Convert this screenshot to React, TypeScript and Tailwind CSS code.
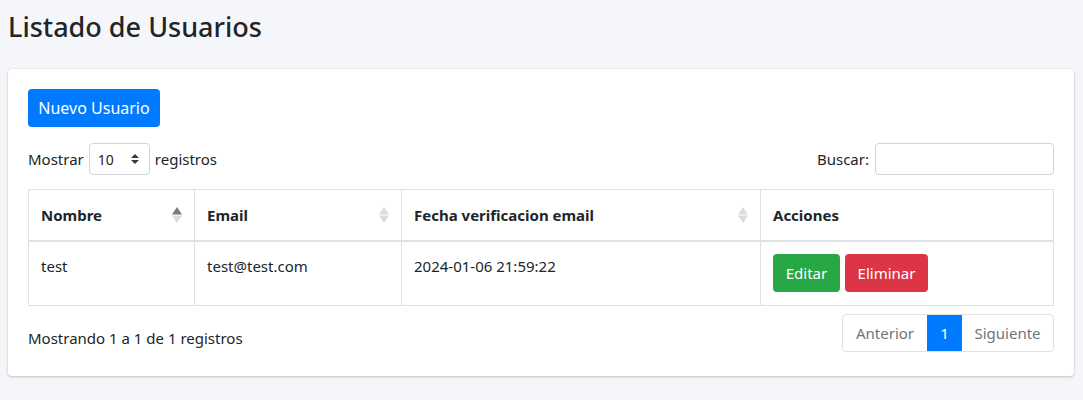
import React from 'react'

function SortIcon({ active }: { active?: boolean }) {
  return (
    <svg width="10" height="16" viewBox="0 0 10 16" className="shrink-0">
      <path d="M5 0 L10 7.5 L0 7.5 Z" fill={active ? '#7a7a7a' : '#dcdcdc'} />
      <path d="M5 16 L10 8.5 L0 8.5 Z" fill="#dcdcdc" />
    </svg>
  )
}

const users = [{ name: 'test', email: 'test@test.com', verified: '2024-01-06 21:59:22' }]

export default function App() {
  return (
    <div
      className="min-h-[400px] bg-[#f4f6f9] text-[#212529] text-[16px]"
      style={{ fontFamily: '"Noto Sans", "Open Sans", sans-serif' }}
    >
      {/* Header */}
      <div className="h-[69px] px-2 pt-[11px]">
        <h1 className="text-[27px] leading-[1.2] font-medium">Listado de Usuarios</h1>
      </div>

      {/* Card */}
      <div className="ml-[8px] h-[307px] w-[1066px] rounded-[4px] bg-white shadow-[0_0_1px_rgba(0,0,0,0.125),0_1px_3px_rgba(0,0,0,0.2)]">
        <div className="p-5">
          <button className="h-[38px] w-[132px] rounded-[4px] bg-[#007bff] text-white leading-6">
            Nuevo Usuario
          </button>

          {/* Controls */}
          <div className="mt-4 flex items-center justify-between">
            <div className="flex items-center gap-[5px] text-[15px]">
              <span>Mostrar</span>
              <div className="flex h-[32px] w-[61px] items-center justify-between rounded-[4px] border border-[#ced4da] pl-2 pr-[10px] text-[14px]">
                <span>10</span>
                <svg width="8" height="10" viewBox="0 0 8 10">
                  <path d="M4 0 L8 4 L0 4 Z M4 10 L8 6 L0 6 Z" fill="#343a40" />
                </svg>
              </div>
              <span>registros</span>
            </div>
            <div className="flex items-center gap-[6px] text-[15px]">
              <span>Buscar:</span>
              <div className="h-[32px] w-[179px] rounded-[4px] border border-[#ced4da]" />
            </div>
          </div>

          {/* Table */}
          <table className="mt-[14px] w-full table-fixed border-collapse border border-[#dee2e6]">
            <colgroup>
              <col className="w-[166px]" />
              <col className="w-[207px]" />
              <col className="w-[359px]" />
              <col />
            </colgroup>
            <thead>
              <tr className="border-b-2 border-[#dee2e6]">
                <th className="border-r border-[#dee2e6] px-3 py-[13px] text-left font-bold text-[15px] leading-6">
                  <div className="flex items-center justify-between">
                    <span>Nombre</span>
                    <SortIcon active />
                  </div>
                </th>
                <th className="border-r border-[#dee2e6] px-3 py-[13px] text-left font-bold text-[15px] leading-6">
                  <div className="flex items-center justify-between">
                    <span>Email</span>
                    <SortIcon />
                  </div>
                </th>
                <th className="border-r border-[#dee2e6] px-3 py-[13px] text-left font-bold text-[15px] leading-6">
                  <div className="flex items-center justify-between">
                    <span>Fecha verificacion email</span>
                    <SortIcon />
                  </div>
                </th>
                <th className="px-3 py-[13px] text-left font-bold text-[15px] leading-6">Acciones</th>
              </tr>
            </thead>
            <tbody>
              {users.map((u) => (
                <tr key={u.email} className="border-b border-[#dee2e6]">
                  <td className="border-r border-[#dee2e6] px-3 pt-3 pb-[13px] align-top text-[15px] leading-6">{u.name}</td>
                  <td className="border-r border-[#dee2e6] px-3 pt-3 pb-[13px] align-top text-[15px] leading-6">{u.email}</td>
                  <td className="border-r border-[#dee2e6] px-3 pt-3 pb-[13px] align-top text-[15px] leading-6">{u.verified}</td>
                  <td className="px-3 pt-3 pb-[13px] align-top">
                    <div className="flex gap-[5px]">
                      <button className="h-[38px] w-[67px] rounded-[4px] bg-[#28a745] text-[15px] text-white">
                        Editar
                      </button>
                      <button className="h-[38px] w-[83px] rounded-[4px] bg-[#dc3545] text-[15px] text-white">
                        Eliminar
                      </button>
                    </div>
                  </td>
                </tr>
              ))}
            </tbody>
          </table>

          {/* Footer */}
          <div className="mt-[8px] flex items-start justify-between">
            <div className="pt-[12px] text-[15px] leading-6">Mostrando 1 a 1 de 1 registros</div>
            <div className="flex h-[38px] overflow-hidden rounded-[4px] border border-[#dee2e6] text-[15px]">
              <span className="flex w-[84px] items-center justify-center text-[#6c757d]">Anterior</span>
              <span className="flex w-[35px] items-center justify-center bg-[#007bff] text-white">1</span>
              <span className="flex w-[91px] items-center justify-center text-[#6c757d]">Siguiente</span>
            </div>
          </div>
        </div>
      </div>
    </div>
  )
}
